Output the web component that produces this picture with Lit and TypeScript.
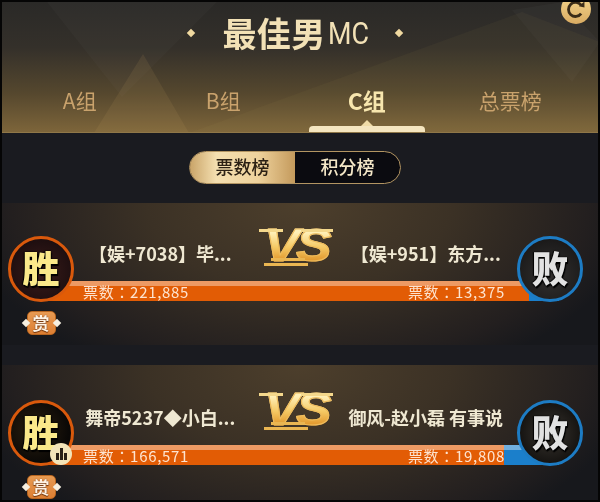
import { LitElement, html, css, svg } from "lit";
import { customElement } from "lit/decorators.js";

interface Side { name: string; votes: number; }
interface Match { left: Side; right: Side; chart: boolean; tall: boolean; }

const MATCHES: Match[] = [
  { left: { name: "【娱+7038】毕...", votes: 221885 }, right: { name: "【娱+951】东方...", votes: 13375 }, chart: false, tall: false },
  { left: { name: "舞帝5237◆小白...", votes: 166571 }, right: { name: "御风-赵小磊 有事说", votes: 19808 }, chart: true, tall: true },
];

const TABS = ["A组", "B组", "C组", "总票榜"];
const fmt = (n: number) => n.toLocaleString("en-US");

@customElement("app-root")
export class AppRoot extends LitElement {
  static styles = css`
    :host {
      display: block;
      width: 600px;
      height: 502px;
      box-sizing: border-box;
      padding: 2px;
      background: #050505;
      overflow: hidden;
      font-family: "Noto Sans CJK SC", "Noto Sans", sans-serif;
    }
    .page {
      height: 498px;
      background: #1a1b20;
      overflow: hidden;
      filter: blur(0.35px);
    }
    .header {
      position: relative;
      height: 131px;
      box-sizing: border-box;
      border-bottom: 1px solid #8f7748;
      background: linear-gradient(180deg, #2a2927 0%, #34302a 35%, #55472e 70%, #7d653a 100%);
      overflow: hidden;
      display: flex;
      flex-direction: column;
    }
    .deco { position: absolute; inset: 0; width: 100%; height: 100%; }
    .refresh { position: absolute; left: 559px; top: -8px; width: 30px; height: 30px; }
    .title {
      position: relative;
      height: 62px;
      padding: 0 10px 0 0;
      display: flex;
      align-items: center;
      justify-content: center;
      color: #f2e1b6;
    }
    .spark { width: 6px; height: 6px; background: #f0d9a0; transform: rotate(45deg); }
    .title-text { margin: 0 28px 0 29px; display: flex; align-items: center; white-space: nowrap; }
    .zh { font-size: 34px; font-weight: 700; line-height: 44px; letter-spacing: 0.3px; }
    .mc {
      font-family: "Roboto", sans-serif;
      font-weight: 400;
      font-size: 32px;
      line-height: 44px;
      margin-left: 3px;
      transform: scaleX(0.84);
      transform-origin: left center;
      width: 40px;
    }
    .tabs {
      position: relative;
      flex: 1;
      margin: 0 16px 0 6px;
      display: grid;
      grid-template-columns: repeat(4, 1fr);
    }
    .tab {
      display: flex;
      flex-direction: column;
      align-items: center;
      color: #c9a26c;
      font-size: 21px;
      line-height: 30px;
      padding-top: 21px;
    }
    .tab.on { color: #f7e6ae; font-weight: 700; font-size: 23px; }
    .mark {
      margin-top: auto;
      position: relative;
      width: 116px;
      height: 6px;
      border-radius: 4px 4px 0 0;
      background: #f5e6c0;
    }
    .mark::before {
      content: "";
      position: absolute;
      left: 50%;
      top: -6px;
      margin-left: -6px;
      border: 6px solid transparent;
      border-top: 0;
      border-bottom: 6px solid #f0dca8;
    }
    .switch-row { display: flex; justify-content: center; padding: 18px 10px 0 0; height: 33px; }
    .switch {
      display: flex;
      width: 212px;
      height: 33px;
      box-sizing: border-box;
      border: 1.5px solid #b39562;
      border-radius: 17px;
      overflow: hidden;
      background: #0b0b10;
      font-size: 18px;
      font-weight: 500;
      line-height: 29px;
      text-align: center;
    }
    .switch span { flex: 1; color: #f5e8c8; }
    .switch .active {
      flex: 0 0 105px;
      color: #2b2013;
      background: linear-gradient(90deg, #c9a468 0%, #f4dfb0 25%, #eed29c 65%, #c49a5c 100%);
    }
    .list { padding-top: 19px; display: flex; flex-direction: column; gap: 20px; }
    .match {
      height: 142px;
      box-sizing: border-box;
      padding: 33px 15px 0 6px;
      display: grid;
      grid-template-columns: 66px 1fr 66px;
      grid-template-rows: 66px auto;
      background: radial-gradient(ellipse 340px 190px at 50% 0, #4d3f2c 0%, #3b3125 45%, #231f1f 85%, #17181c 100%);
    }
    .match.tall { padding-top: 35px; }
    .avatar {
      position: relative;
      z-index: 1;
      box-sizing: border-box;
      width: 66px;
      height: 66px;
      border-radius: 50%;
      border: 3px solid #d9590c;
      padding-bottom: 4px;
      display: flex;
      align-items: center;
      justify-content: center;
      font-size: 37px;
      font-weight: 900;
      line-height: 1;
      color: #fbe98a;
      background: radial-gradient(circle at 50% 55%, #3b1c1a, #1f0f10 70%);
      text-shadow: 0 0 2px #000, 1px 2px 1px #000, -1px 0 1px #000;
    }
    .avatar.lose {
      border-color: #1d7cc4;
      color: #e2e2e2;
      background: radial-gradient(circle at 50% 60%, #333130, #1b1a1a 75%);
    }
    .tall .avatar { background: radial-gradient(circle at 40% 45%, #2c2010, #0a0806 70%); }
    .tall .avatar.lose { background: radial-gradient(circle at 50% 50%, #3a3630, #141210 75%); }
    .chart {
      position: absolute;
      right: -1px;
      bottom: -2px;
      width: 22px;
      height: 22px;
      border-radius: 50%;
      background: #f3e4b8;
      display: flex;
      align-items: flex-end;
      justify-content: center;
      gap: 1px;
      box-sizing: border-box;
      padding-bottom: 5px;
    }
    .chart i { display: block; width: 3px; background: #2a2116; }
    .mid { min-width: 0; display: flex; flex-direction: column; }
    .names { height: 45px; display: flex; gap: 12px; }
    .name {
      flex: 1 1 0;
      box-sizing: border-box;
      min-width: 0;
      text-align: center;
      white-space: nowrap;
      color: #efe8d2;
      font-size: 18px;
      font-weight: 700;
      line-height: 35px;
    }
    .name.right { transform: translateX(-5px); }
    .vs {
      position: relative;
      flex: 0 0 74px;
      height: 37px;
      margin-top: -8px;
    }
    .vs b {
      display: block;
      font-family: "Liberation Sans", sans-serif;
      font-style: italic;
      font-weight: 700;
      font-size: 46px;
      line-height: 35px;
      letter-spacing: -3px;
      text-align: center;
      transform: scaleX(1.16);
      background: linear-gradient(180deg, #fff0b8 12%, #f5c964 55%, #e39c32 90%);
      -webkit-background-clip: text;
      background-clip: text;
      color: transparent;
      -webkit-text-stroke: 1px #eebb5c;
    }
    .vs i {
      position: absolute;
      height: 3px;
      background: #eab652;
    }
    .vs .l1 { left: 5px; bottom: -1px; width: 44px; }
    .vs .l2 { left: 12px; bottom: 4px; width: 34px; }
    .vs .l3 { left: 42px; top: 1px; width: 32px; background: #f4d88c; }
    .vs .l4 { left: 0; top: 1px; width: 24px; background: #f4d88c; }
    .bar {
      margin: 0 -42px 0 -33px;
      height: 20px;
      padding: 0 54px 0 42px;
      display: flex;
      justify-content: space-between;
      color: #fde3cf;
      font-family: "Noto Sans CJK TC", "Noto Sans", sans-serif;
      font-size: 15px;
      line-height: 22px;
      letter-spacing: 0.7px;
      white-space: nowrap;
      background:
        linear-gradient(180deg, rgba(255, 255, 255, 0.38) 0 5px, rgba(255, 255, 255, 0) 5px),
        linear-gradient(90deg, #e25c05 var(--share), #1b7fcb var(--share));
    }
    .badge {
      position: relative;
      justify-self: center;
      margin-top: 9px;
      width: 29px;
      height: 24px;
      box-sizing: border-box;
      border: 1px solid #b9661f;
      border-radius: 5px;
      background: linear-gradient(180deg, #e79a52, #dd7f33);
      color: #fff3e4;
      font-size: 17px;
      font-weight: 700;
      line-height: 21px;
      text-align: center;
      text-shadow: 0 0 1px #6b2f08, 0 1px 1px #6b2f08;
    }
    .badge::before, .badge::after {
      content: "";
      position: absolute;
      top: 8px;
      width: 6px;
      height: 6px;
      background: #f6efe0;
      transform: rotate(45deg);
    }
    .badge::before { left: -5px; }
    .badge::after { right: -5px; }
  `;

  private deco() {
    return svg`
      <polygon points="45,0 215,0 120,95" fill="#ffffff" opacity="0.018"/>
      <polygon points="141,52 92,131 187,131" fill="#c9a766" opacity="0.11"/>
      <polygon points="187,131 520,10 598,40 598,131" fill="#c9a766" opacity="0.05"/>
      <polygon points="510,8 560,0 598,40 570,80" fill="#ffffff" opacity="0.025"/>
    `;
  }

  private renderMatch(m: Match) {
    const share = (m.left.votes / (m.left.votes + m.right.votes)) * 100;
    return html`
      <div class="match ${m.tall ? "tall" : ""}">
        <div class="avatar">
          胜
          ${m.chart ? html`<span class="chart"><i style="height:7px"></i><i style="height:12px"></i><i style="height:7px"></i></span>` : ""}
        </div>
        <div class="mid">
          <div class="names">
            <div class="name">${m.left.name}</div>
            <div class="vs"><b>VS</b><i class="l1"></i><i class="l2"></i><i class="l3"></i><i class="l4"></i></div>
            <div class="name right">${m.right.name}</div>
          </div>
          <div class="bar" style="--share:${share.toFixed(1)}%">
            <span>票数：${fmt(m.left.votes)}</span>
            <span>票数：${fmt(m.right.votes)}</span>
          </div>
        </div>
        <div class="avatar lose">败</div>
        <div class="badge">赏</div>
      </div>
    `;
  }

  render() {
    return html`
      <div class="page">
        <div class="header">
          <svg class="deco" viewBox="0 0 596 130" preserveAspectRatio="none">${this.deco()}</svg>
          <div class="title">
            <span class="spark"></span>
            <div class="title-text"><span class="zh">最佳男</span><span class="mc">MC</span></div>
            <span class="spark"></span>
          </div>
          <div class="tabs">
            ${TABS.map((t, i) => html`
              <div class="tab ${i === 2 ? "on" : ""}">
                <span>${t}</span>
                ${i === 2 ? html`<span class="mark"></span>` : ""}
              </div>`)}
          </div>
          <svg class="refresh" viewBox="0 0 32 32">
            <defs><linearGradient id="g" x1="0" y1="0" x2="0" y2="1"><stop offset="0" stop-color="#f5d88e"/><stop offset="1" stop-color="#d9ab62"/></linearGradient></defs>
            <circle cx="16" cy="16" r="16" fill="url(#g)"/>
            <path d="M21.5 12 A7.5 7.5 0 1 0 21.5 21" fill="none" stroke="#3a2c18" stroke-width="3"/>
            <polygon points="19,13 25,14.5 25,8" fill="#3a2c18"/>
          </svg>
        </div>
        <div class="switch-row">
          <div class="switch"><span class="active">票数榜</span><span>积分榜</span></div>
        </div>
        <div class="list">${MATCHES.map((m) => this.renderMatch(m))}</div>
      </div>
    `;
  }
}
